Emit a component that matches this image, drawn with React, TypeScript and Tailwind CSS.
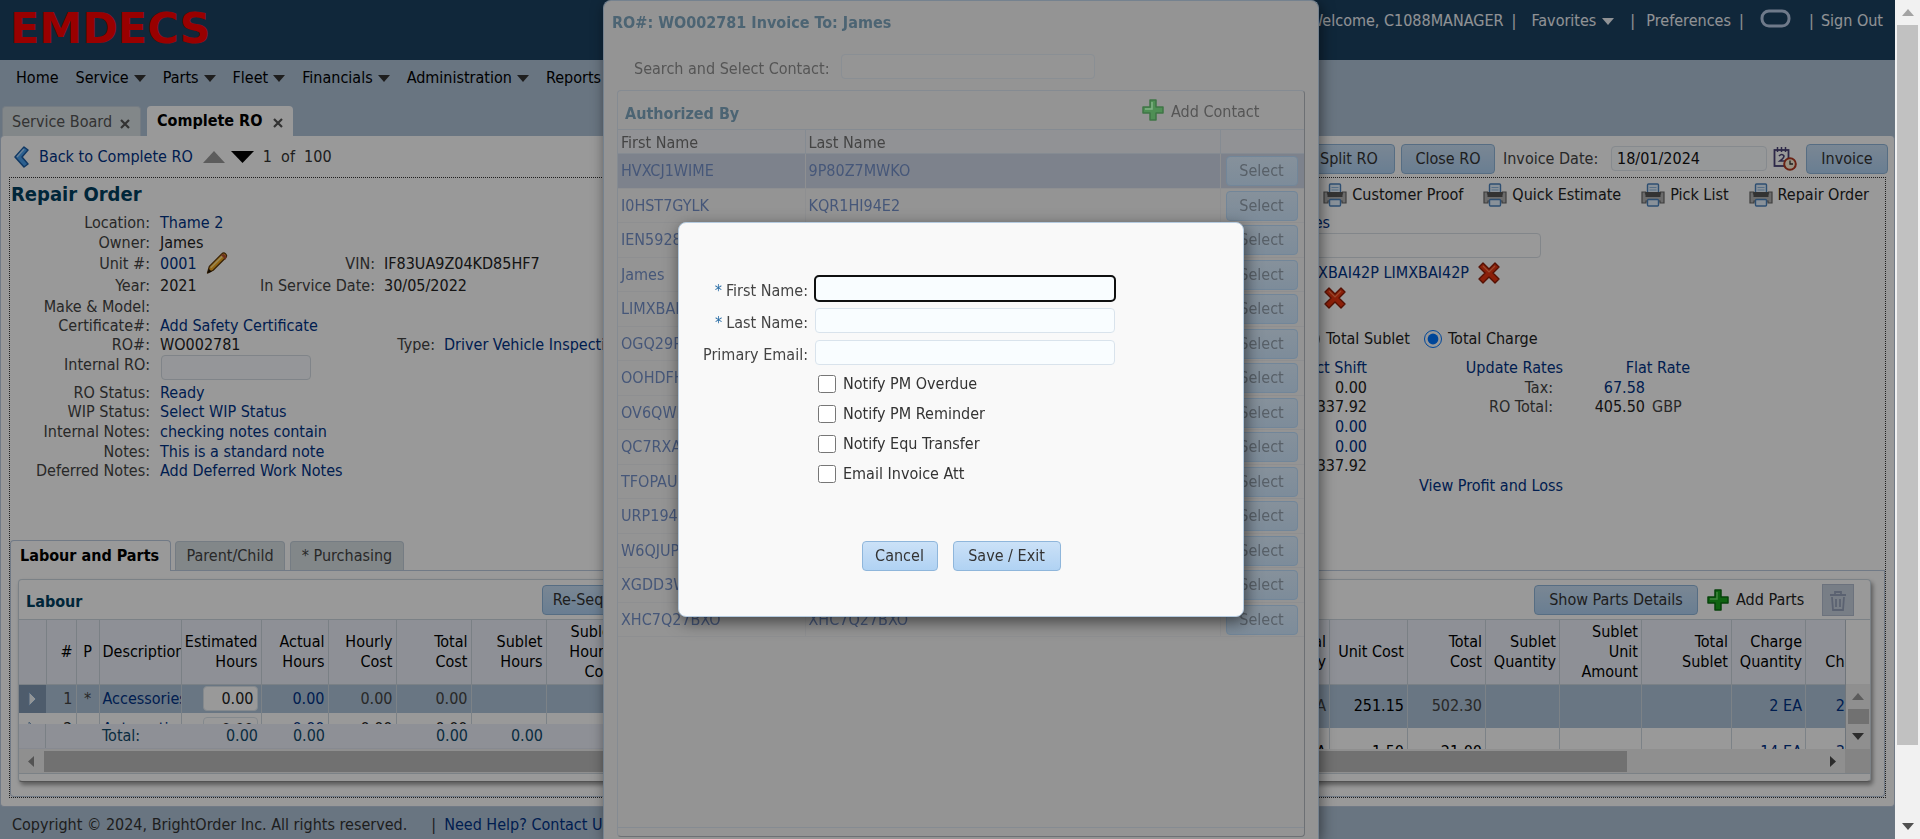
import React from 'react';

const BTN =
  'h-[30px] shrink-0 rounded border border-[#8fb6db] bg-gradient-to-b from-[#cbe1f7] to-[#b0d2f3] whitespace-nowrap text-[#333]';

function Caret({ className = '' }: { className?: string }) {
  return (
    <svg className={`shrink-0 ${className}`} width="12" height="7" viewBox="0 0 12 7" fill="currentColor">
      <path d="M0 0h12L6 7z" />
    </svg>
  );
}

function Plus({ light = false }: { light?: boolean }) {
  return (
    <svg className="shrink-0" width="22" height="22" viewBox="0 0 22 22">
      <path
        d="M8 1h6v7h7v6h-7v7H8v-7H1V8h7z"
        fill={light ? '#4f8f55' : '#18a51c'}
        stroke={light ? '#3f7546' : '#0a6f10'}
        strokeWidth="1.5"
        strokeLinejoin="round"
      />
      <path d="M10 3v7H3" fill="none" stroke={light ? '#83b387' : '#6fe06a'} strokeWidth="1.5" />
    </svg>
  );
}

function RedX() {
  return (
    <svg className="shrink-0" width="22" height="22" viewBox="0 0 22 22">
      <path
        d="M5 1l6 6 6-6 4 4-6 6 6 6-4 4-6-6-6 6-4-4 6-6-6-6z"
        fill="#e8350f"
        stroke="#8e1c05"
        strokeWidth="1.4"
        strokeLinejoin="round"
      />
      <path d="M5 4l6 6 6-6" fill="none" stroke="#ff7a4d" strokeWidth="1.2" />
    </svg>
  );
}

function Printer() {
  return (
    <svg className="shrink-0" width="24" height="24" viewBox="0 0 24 24">
      <rect x="6.500" y="1" width="11" height="10" rx="1" fill="#e4f2ff" stroke="#4c83bd" strokeWidth="1.4" />
      <path d="M8.500 4.500h7M8.500 7h7" stroke="#8fb9e2" />
      <path d="M1 9h3.500v2h15V9H23v11h-4v-2H5v2H1z" fill="#b5b5b5" stroke="#666" strokeWidth="1.2" />
      <rect x="4.500" y="9" width="15" height="5" fill="#555" />
      <rect x="6.500" y="16.500" width="11" height="6.500" rx="1" fill="#e4f2ff" stroke="#4c83bd" strokeWidth="1.4" />
    </svg>
  );
}

function CalendarClock() {
  return (
    <svg className="shrink-0" width="24" height="24" viewBox="0 0 24 24">
      <rect x="1.500" y="3" width="14" height="16" fill="#fff" stroke="#4b4478" strokeWidth="1.8" />
      <path d="M4.500 0v5M8.500 0v5M12.500 0v5" stroke="#4b4478" strokeWidth="1.5" />
      <path d="M6 9q3-3 5 0 0 2-4 5h5" fill="none" stroke="#4b4478" strokeWidth="1.6" />
      <circle cx="17" cy="17" r="5.800" fill="#fff3dd" stroke="#b23a22" strokeWidth="2" />
      <path d="M17 13.500V17h3" fill="none" stroke="#333" strokeWidth="1.3" />
    </svg>
  );
}

function Pencil() {
  return (
    <svg className="shrink-0" width="24" height="23" viewBox="0 0 24 24">
      <path d="M2 22l2-7L17 2q2-2 4 0t0 4L8 19z" fill="#f3a81f" stroke="#5b3607" strokeWidth="1.3" strokeLinejoin="round" />
      <path d="M5.500 16.500L18 4" stroke="#ffe08a" strokeWidth="1.6" />
      <path d="M16 3l5 5 1-3-3-3z" fill="#b6543a" />
      <path d="M2 22l1.500-4.500 3 3z" fill="#1c1206" />
    </svg>
  );
}

function TextLink({ children, className = '' }: { children: React.ReactNode; className?: string }) {
  return (
    <a href="#" className={`whitespace-nowrap text-[#003286] ${className}`}>
      {children}
    </a>
  );
}

function Field({ label, children, wide, second }: { label: string; children?: React.ReactNode; wide?: boolean; second?: [string, React.ReactNode] }) {
  return (
    <div className="flex items-center whitespace-nowrap">
      <span className="w-[140px] shrink-0 text-right text-[#444]">{label}</span>
      <span className="ml-[10px] flex w-[95px] shrink-0 items-center gap-2 text-[#222]">{children}</span>
      {second && (
        <>
          <span className={`shrink-0 text-right text-[#444] ${wide ? 'w-[180px]' : 'w-[120px]'}`}>{second[0]}</span>
          <span className="ml-[9px] text-[#222]">{second[1]}</span>
        </>
      )}
    </div>
  );
}

function TopBar() {
  return (
    <header className="flex h-[60px] items-start justify-between bg-[#1c4162] pl-[10px] text-[#f0f4f8]">
      <a href="#" className="mt-[7px] font-['DejaVu_Sans',sans-serif] text-[43px] leading-[42px] font-bold text-[#ff0000]">
        EMDECS
      </a>
      <div className="flex h-[42px] items-center pr-3 whitespace-nowrap">
        <span>Welcome, C1088MANAGER</span>
        <span className="ml-2 w-1">|</span>
        <button className="ml-4 flex items-center gap-[6px]">
          Favorites <Caret />
        </button>
        <span className="ml-4 w-1">|</span>
        <a href="#" className="ml-3">Preferences</a>
        <span className="ml-2 w-1">|</span>
        <svg className="ml-4 mb-1" width="34" height="20" viewBox="0 0 34 20" fill="none">
          <rect x="3" y="2" width="27" height="15" rx="7" stroke="#b9cbe6" strokeWidth="3" />
        </svg>
        <span className="ml-4 w-1">|</span>
        <a href="#" className="ml-2">Sign Out</a>
      </div>
    </header>
  );
}

const MENU: [string, boolean][] = [
  ['Home', false],
  ['Service', true],
  ['Parts', true],
  ['Fleet', true],
  ['Financials', true],
  ['Administration', true],
  ['Reports', true],
];

function Nav() {
  return (
    <nav className="rounded-t bg-[#afc3d8]">
      <div className="flex h-[36px] items-center gap-[17px] pl-4 text-black">
        {MENU.map(([name, drop]) => (
          <button key={name} className="flex items-center gap-[5px] whitespace-nowrap">
            {name} {drop && <Caret className="text-[#333]" />}
          </button>
        ))}
      </div>
      <div className="flex h-[40px] items-end gap-[6px] pl-[2px]">
        <div className="flex h-[30px] w-[139px] items-center justify-between rounded-t border border-b-0 border-[#c3cfdb] bg-[#d9e1e4] pr-2 pl-[9px] text-[#555] whitespace-nowrap">
          Service Board
          <button aria-label="Close Service Board" className="pt-1"><CloseMark /></button>
        </div>
        <div className="flex h-[30px] w-[146px] items-center justify-between rounded-t bg-white pr-2 pl-[10px] font-bold text-black whitespace-nowrap">
          Complete RO
          <button aria-label="Close Complete RO" className="pt-1"><CloseMark /></button>
        </div>
      </div>
    </nav>
  );
}

function CloseMark() {
  return (
    <svg width="14" height="12" viewBox="0 0 14 12">
      <path d="M3 2l8 8M11 2l-8 8" stroke="#555" strokeWidth="2.200" />
    </svg>
  );
}

function ActionRow() {
  return (
    <div className="flex h-[41px] items-center justify-between pr-[6px] pl-3">
      <div className="flex items-center whitespace-nowrap">
        <svg width="18" height="22" viewBox="0 0 18 22">
          <path d="M11 1l4 3-6 7 6 7-4 3-9-10z" fill="#4aa0ee" stroke="#1c5da6" strokeWidth="1.5" strokeLinejoin="round" />
          <path d="M11 3l-7 8" stroke="#a9d6ff" strokeWidth="1.5" />
        </svg>
        <TextLink className="ml-2">Back to Complete RO</TextLink>
        <button aria-label="Previous" className="ml-[10px] text-[#999]">
          <svg width="22" height="12" viewBox="0 0 22 12" fill="currentColor"><path d="M0 12h22L11 0z" /></svg>
        </button>
        <button aria-label="Next" className="ml-[6px] text-black">
          <svg width="23" height="12" viewBox="0 0 23 12" fill="currentColor"><path d="M0 0h23L11.500 12z" /></svg>
        </button>
        <span className="ml-[9px] text-[#333]">1&nbsp; of &nbsp;100</span>
      </div>
      <div className="flex items-center pt-[4px] whitespace-nowrap">
        <button className={`${BTN} w-[92px]`}>Split RO</button>
        <button className={`${BTN} ml-[6px] w-[94px]`}>Close RO</button>
        <label htmlFor="invoice-date" className="ml-2 w-[108px] text-[#444]">Invoice Date:</label>
        <input id="invoice-date" defaultValue="18/01/2024" className="h-[25px] w-[156px] rounded border border-[#dfe6ed] bg-[#fbfdff] px-[5px] text-[#111]" />
        <button aria-label="Pick date" className="mr-[9px] ml-[6px]"><CalendarClock /></button>
        <button className={`${BTN} w-[82px]`}>Invoice</button>
      </div>
    </div>
  );
}

function OrderFields() {
  return (
    <div className="min-w-0 flex-1 overflow-hidden">
      <h1 className="h-[35px] pl-[1px] text-[20px] leading-[32px] font-bold text-[#00405f]">Repair Order</h1>
      <div className="grid h-[142px] grid-rows-[20px_19px_23px_22px_19px_19px_20px] text-[#222]">
        <Field label="Location:"><TextLink>Thame 2</TextLink></Field>
        <Field label="Owner:">James</Field>
        <Field label="Unit #:" second={['VIN:', 'IF83UA9Z04KD85HF7']}>
          <TextLink>0001</TextLink>
          <button aria-label="Edit unit"><Pencil /></button>
        </Field>
        <Field label="Year:" second={['In Service Date:', '30/05/2022']}>2021</Field>
        <Field label="Make &amp; Model:" />
        <Field label="Certificate#:"><TextLink>Add Safety Certificate</TextLink></Field>
        <Field label="RO#:" wide second={['Type:', <TextLink>Driver Vehicle Inspection</TextLink>]}>WO002781</Field>
      </div>
      <div className="flex h-[28px] items-start">
        <label htmlFor="internal-ro" className="w-[140px] text-right leading-[20px] text-[#444]">Internal RO:</label>
        <input id="internal-ro" className="ml-[11px] h-[25px] w-[150px] rounded border border-[#d5dde4] bg-[#f8fbff]" />
      </div>
      <div className="grid h-[98px] grid-rows-5">
        <Field label="RO Status:"><TextLink>Ready</TextLink></Field>
        <Field label="WIP Status:"><TextLink>Select WIP Status</TextLink></Field>
        <Field label="Internal Notes:"><TextLink>checking notes contain</TextLink></Field>
        <Field label="Notes:"><TextLink>This is a standard note</TextLink></Field>
        <Field label="Deferred Notes:"><TextLink>Add Deferred Work Notes</TextLink></Field>
      </div>
    </div>
  );
}

function Summary() {
  return (
    <div className="w-[620px] shrink-0 whitespace-nowrap">
      <div className="flex h-[34px] items-center justify-end gap-5 pr-[16px]">
        {['Customer Proof', 'Quick Estimate', 'Pick List', 'Repair Order'].map((t) => (
          <a key={t} href="#" className="flex items-center gap-[5px] text-[#222]">
            <Printer />
            {t}
          </a>
        ))}
      </div>
      <div className="flex h-[21px] w-[65px] items-center justify-end"><TextLink>Notes</TextLink></div>
      <input aria-label="Notes filter" className="block h-[25px] w-[276px] rounded border border-[#d9e0e6] bg-white" />
      <div className="flex h-[30px] w-[235px] items-center justify-end gap-[9px]">
        <TextLink>LIMXBAI42P LIMXBAI42P</TextLink>
        <button aria-label="Remove contact"><RedX /></button>
      </div>
      <div className="flex h-[20px] w-[81px] items-center justify-end">
        <button aria-label="Remove"><RedX /></button>
      </div>
      <div className="mt-[17px] flex h-[28px] items-center pl-[37px] text-[#222]">
        <input type="radio" id="t-sublet" name="total" className="size-[18px]" />
        <label htmlFor="t-sublet" className="ml-[6px] w-[98px]">Total Sublet</label>
        <input type="radio" id="t-charge" name="total" defaultChecked className="size-[18px] accent-[#0075ff]" />
        <label htmlFor="t-charge" className="ml-[6px]">Total Charge</label>
      </div>
      <div className="mt-[5px] grid h-[138px] grid-cols-[102px_196px_82px_45px] grid-rows-7 items-center text-right text-[#222]">
        <TextLink>Select Shift</TextLink>
        <TextLink>Update Rates</TextLink>
        <TextLink className="col-span-2">Flat Rate</TextLink>
        <span>0.00</span>
        <span className="pr-[10px] text-[#444]">Tax:</span>
        <TextLink>67.58</TextLink>
        <span />
        <span>337.92</span>
        <span className="pr-[10px] text-[#444]">RO Total:</span>
        <span>405.50</span>
        <span className="pl-[7px] text-left text-[#444]">GBP</span>
        <TextLink className="col-start-1">0.00</TextLink>
        <TextLink className="col-start-1">0.00</TextLink>
        <span className="col-start-1">337.92</span>
        <TextLink className="col-start-2 row-start-7">View Profit and Loss</TextLink>
      </div>
    </div>
  );
}

const PANEL =
  'flex min-w-0 flex-1 flex-col overflow-hidden rounded border border-[#cdd8e0] border-b-[#8a8a8a] bg-white shadow-[2px_3px_4px_rgba(0,0,0,0.4)]';
const TH = 'border-r border-[#ccd5de] px-[3px] text-right font-normal leading-5';
const TD = 'border-r border-[#cfd9e2] px-[3px] text-right whitespace-nowrap overflow-hidden';

function ExpandMark() {
  return (
    <svg className="mx-auto" width="9" height="14" viewBox="0 0 9 14">
      <path d="M1 0l7 7-7 7z" fill="#f4f8fc" stroke="#7fa0c4" />
    </svg>
  );
}

function LabourPanel() {
  return (
    <section className={PANEL}>
      <div className="flex h-[39px] items-center pl-[7px]">
        <h2 className="w-[516px] pt-1 text-[16px] font-bold text-[#00405f]">Labour</h2>
        <button className={`${BTN} w-[116px]`}>Re-Sequence</button>
      </div>
      <div className="h-[130px] overflow-hidden border-t border-[#cdd8e0]">
        <div className="h-[104px] overflow-hidden">
          <table className="w-full table-fixed border-collapse">
            <colgroup>
              <col className="w-[27px]" />
              <col className="w-[30px]" />
              <col className="w-[23px]" />
              <col className="w-[82px]" />
              <col className="w-[80px]" />
              <col className="w-[67px]" />
              <col className="w-[68px]" />
              <col className="w-[75px]" />
              <col className="w-[75px]" />
              <col className="w-[74px]" />
              <col />
            </colgroup>
            <thead>
              <tr className="h-[64px] border-b border-[#cdd8e0] bg-[#edf1fa] text-black">
                <th className={TH} />
                <th className={TH}>#</th>
                <th className="border-r border-[#ccd5de] px-0 text-center font-normal">P</th>
                <th className={`${TH} overflow-hidden`}>
                  <span className="flex">Description</span>
                </th>
                <th className={TH}>Estimated Hours</th>
                <th className={TH}>Actual Hours</th>
                <th className={TH}>Hourly Cost</th>
                <th className={`${TH} pl-5`}>Total Cost</th>
                <th className={TH}>Sublet Hours</th>
                <th className={TH}>Sublet Hourly Cost</th>
                <th className={TH} />
              </tr>
            </thead>
            <tbody>
              {[
                ['1', '*', 'Accessories', true],
                ['2', '', 'Automotive', false],
              ].map(([n, p, d, on]) => (
                <tr key={String(n)} className={on ? 'h-[29px] bg-[#afc5da] text-[#444]' : 'h-[32px] text-[#222]'}>
                  <td className={on ? 'bg-[#8299b5]' : ''}><ExpandMark /></td>
                  <td className={TD}>{n}</td>
                  <td className="border-r border-[#cfd9e2] px-0 text-center">{p}</td>
                  <td className={`${TD} text-left`}><TextLink>{d}</TextLink></td>
                  <td className={TD}>
                    <input aria-label={`Estimated hours ${n}`} defaultValue="0.00" className="ml-auto block h-[25px] w-[55px] rounded border border-[#dde5ec] bg-white px-[3px] text-right text-[#222]" />
                  </td>
                  <td className={TD}><TextLink>0.00</TextLink></td>
                  <td className={TD}>0.00</td>
                  <td className={TD}>0.00</td>
                  <td className={TD} />
                  <td className={TD} />
                  <td className={TD} />
                </tr>
              ))}
            </tbody>
          </table>
        </div>
        <div className="flex h-[25px] items-center border-b border-[#e2e7f2] bg-[#edf1fa] text-[#124a6b]">
          <span className="h-full w-[27px] shrink-0 border-r border-[#ccd5de]" />
          <span className="w-[135px] shrink-0 pl-[56px]">Total:</span>
          <span className="w-[77px] shrink-0 text-right">0.00</span>
          <span className="w-[67px] shrink-0 text-right">0.00</span>
          <span className="w-[143px] shrink-0 text-right">0.00</span>
          <span className="w-[75px] shrink-0 text-right">0.00</span>
        </div>
      </div>
      <div className="flex h-[25px] items-center border-b border-[#cdd8e0] bg-[#efefef] pl-[9px]">
        <svg width="16" height="11" viewBox="0 0 16 11" fill="#8a8a8a"><path d="M6 0v11L0 5.500z" /></svg>
        <div className="h-[21px] flex-1 bg-[#bdbdbd]" />
      </div>
      <div className="h-[7px]" />
    </section>
  );
}

function PartsPanel() {
  const rows = [
    ['2 EA', '251.15', '502.30', '2 EA', '27.50'],
    ['14 EA', '1.50', '21.00', '14 EA', '32.50'],
  ];
  return (
    <section className={PANEL}>
      <div className="flex h-[39px] items-center justify-end pt-px pr-4 whitespace-nowrap">
        <button className={`${BTN} w-[164px]`}>Show Parts Details</button>
        <button className="ml-[9px] flex w-[100px] items-center gap-[7px] text-[#222]">
          <Plus /> Add Parts
        </button>
        <button aria-label="Delete" className="ml-[15px] flex size-8 items-center justify-center border border-[#b4bfd0] bg-[#c9d2e0]">
          <svg width="18" height="21" viewBox="0 0 18 21" fill="none" stroke="#98a4bd" strokeWidth="1.8">
            <path d="M1 5h16M6 5V2h6v3M3 7l1 13h10l1-13M7 9v8M11 9v8" />
          </svg>
        </button>
      </div>
      <div className="flex h-[130px] border-t border-[#cdd8e0]">
        <div className="min-w-0 flex-1 overflow-hidden">
          <table className="w-[calc(100%+36px)] table-fixed border-collapse">
            <colgroup>
              <col />
              <col className="w-[78px]" />
              <col className="w-[78px]" />
              <col className="w-[74px]" />
              <col className="w-[82px]" />
              <col className="w-[90px]" />
              <col className="w-[74px]" />
              <col className="w-[75px]" />
            </colgroup>
            <thead>
              <tr className="h-[64px] border-b border-[#cdd8e0] bg-[#edf1fa] text-black">
                <th className={TH}>Total<br />Quantity</th>
                <th className={TH}>Unit Cost</th>
                <th className={TH}>Total<br />Cost</th>
                <th className={TH}>Sublet Quantity</th>
                <th className={TH}>Sublet<br />Unit<br />Amount</th>
                <th className={TH}>Total<br />Sublet</th>
                <th className={TH}>Charge Quantity</th>
                <th className={TH}>Unit<br />Charge</th>
              </tr>
            </thead>
            <tbody>
              {rows.map((r, i) => (
                <tr key={i} className={i === 0 ? 'h-[44px] bg-[#afc5da] text-[#444]' : 'h-[48px] text-black'}>
                  <td className={TD}>{r[0]}</td>
                  <td className={`${TD} text-black`}>{r[1]}</td>
                  <td className={TD}>{r[2]}</td>
                  <td className={TD} />
                  <td className={TD} />
                  <td className={TD} />
                  <td className={TD}><TextLink>{r[3]}</TextLink></td>
                  <td className={TD}><TextLink>{r[4]}</TextLink></td>
                </tr>
              ))}
            </tbody>
          </table>
        </div>
        <div className="flex w-[25px] shrink-0 flex-col border-l border-[#b9c4ce] pt-[64px]">
          <div className="flex flex-1 flex-col items-center justify-between bg-[#efefef] py-[9px]">
            <svg width="12" height="7" viewBox="0 0 12 7" fill="#9a9a9a"><path d="M0 7h12L6 0z" /></svg>
            <div className="h-[15px] w-[21px] bg-[#bdbdbd]" />
            <Caret className="text-[#4a4a4a]" />
          </div>
        </div>
      </div>
      <div className="flex h-[25px] items-center border-b border-[#cdd8e0] bg-[#efefef]">
        <div className="h-[21px] flex-1 bg-[#bdbdbd]" />
        <div className="flex w-[218px] justify-end pr-[9px]">
          <svg width="6" height="11" viewBox="0 0 6 11" fill="#4a4a4a"><path d="M0 0v11l6-5.500z" /></svg>
        </div>
        <div className="h-full w-[25px] bg-[#dcdcdc]" />
      </div>
      <div className="h-[7px]" />
    </section>
  );
}

function OrderPage() {
  return (
    <div className="flex flex-1 flex-col">
      <TopBar />
      <div className="flex flex-1 flex-col bg-[#afc3d8]">
        <Nav />
        <main className="rounded border border-t-0 border-[#bccbe0] bg-white px-[8px] pb-[8px]">
          <div className="-mx-[8px]"><ActionRow /></div>
          <div className="border border-dotted border-[#333]">
            <div className="flex h-[363px]">
              <OrderFields />
              <Summary />
            </div>
            <div className="flex h-[30px] items-end whitespace-nowrap">
              <button className="h-[31px] w-[161px] shrink-0 rounded-t border border-b-0 border-[#bccbe0] bg-white text-left font-bold text-black">
                <span className="pl-[9px]">Labour and Parts</span>
              </button>
              <div className="flex h-full flex-1 gap-[5px] border-b border-[#bccbe0] pl-1">
                <button className="h-[29px] w-[110px] rounded-t border border-b-0 border-[#c3cfdb] bg-[#d9e1e4] text-[#444]">Parent/Child</button>
                <button className="h-[29px] w-[114px] rounded-t border border-b-0 border-[#c3cfdb] bg-[#d9e1e4] text-[#444]">* Purchasing</button>
              </div>
            </div>
            <div className="flex gap-3 rounded-b border border-t-0 border-[#bccbe0] pt-2 pr-[13px] pb-[14px] pl-[7px]">
              <LabourPanel />
              <PartsPanel />
            </div>
          </div>
        </main>
        <footer className="flex h-[31px] items-center pt-[5px] pl-3 whitespace-nowrap text-[#333]">
          <span>Copyright © 2024, BrightOrder Inc. All rights reserved.</span>
          <span className="ml-6 mr-2">|</span>
          <TextLink>Need Help? Contact Us</TextLink>
        </footer>
      </div>
    </div>
  );
}

const CONTACTS: [string, string][] = [
  ['HVXCJ1WIME', '9P80Z7MWKO'],
  ['I0HST7GYLK', 'KQR1HI94E2'],
  ['IEN5928XQT', 'IEN5928XQT'],
  ['James', 'James'],
  ['LIMXBAI42P', 'LIMXBAI42P'],
  ['OGQ29PLKWE', 'OGQ29PLKWE'],
  ['OOHDFHRT3B', 'OOHDFHRT3B'],
  ['OV6QWMZ81L', 'OV6QWMZ81L'],
  ['QC7RXA5NPD', 'QC7RXA5NPD'],
  ['TFOPAU2HJS', 'TFOPAU2HJS'],
  ['URP194VKCY', 'URP194VKCY'],
  ['W6QJUPE7GF', 'W6QJUPE7GF'],
  ['XGDD3W9TRA', 'XGDD3W9TRA'],
  ['XHC7Q27BXO', 'XHC7Q27BXO'],
];

function ContactDialog() {
  return (
    <div className="flex h-full w-[716px] flex-col rounded-t-lg border border-b-0 border-[#75828f] bg-[#949494] px-[13px] pb-[2px] text-[#555] shadow-[2px_4px_14px_rgba(0,0,0,0.5)]">
      <h2 className="-ml-[5px] h-[45px] text-[16px] leading-[43px] font-bold text-[#4c6473]">RO#: WO002781 Invoice To: James</h2>
      <div className="flex h-[44px] items-center pb-[3px] pl-[17px]">
        <label htmlFor="search-contact" className="w-[207px] pt-1">Search and Select Contact:</label>
        <input id="search-contact" className="h-[25px] w-[254px] rounded border border-[#8a8f94] bg-[#959595]" />
      </div>
      <section className="flex flex-1 flex-col rounded border border-[#858b92] border-r-[#6d7074] border-b-[#6d7074]">
        <div className="flex h-[38px] items-center justify-between pr-[43px] pl-[7px]">
          <h3 className="pt-2 text-[16px] font-bold text-[#4c6473]">Authorized By</h3>
          <button className="flex w-[119px] items-center gap-[7px] whitespace-nowrap">
            <Plus light />
            <span className="pt-1">Add Contact</span>
          </button>
        </div>
        <table className="w-full table-fixed border-collapse text-left">
          <colgroup>
            <col className="w-[187px]" />
            <col />
            <col className="w-[84px]" />
          </colgroup>
          <thead>
            <tr className="h-[24px] border-y border-[#858b92] bg-[#919295] text-[#444]">
              <th className="border-r border-[#858b92] pt-[2px] pb-0 pl-[3px] leading-5 font-normal">First Name</th>
              <th className="border-r border-[#858b92] pt-[2px] pb-0 pl-[3px] leading-5 font-normal">Last Name</th>
              <th />
            </tr>
          </thead>
          <tbody>
            {CONTACTS.map(([first, last], i) => (
              <tr
                key={first}
                className={`odd:h-[35px] even:h-[34px] border-b border-[#8e8f91] text-[#465779] ${i === 0 ? 'bg-[#7d828c]' : ''}`}
              >
                <td className="border-r border-[#8e8f91] py-0 pl-[3px]"><a href="#">{first}</a></td>
                <td className="border-r border-[#8e8f91] py-0 pl-[3px]"><a href="#">{last}</a></td>
                <td className="py-0 pl-[5px]">
                  <button className="block h-[30px] w-[72px] rounded border border-[#728699] bg-gradient-to-b from-[#86919b] to-[#7d8c9a] text-[#586068]">
                    Select
                  </button>
                </td>
              </tr>
            ))}
          </tbody>
        </table>
        <div className="flex-1 border-b border-[#858b92]" />
        <div className="h-[8px]" />
      </section>
    </div>
  );
}

const MODAL_INPUT = 'h-[25px] w-[300px] rounded border border-[#d9e3ec] bg-[#f9fdff] px-1';

function ModalField({ id, label, required, focus }: { id: string; label: string; required?: boolean; focus?: boolean }) {
  return (
    <div className="flex h-[32px] items-start">
      <label htmlFor={id} className="w-[129px] pt-[5px] text-right leading-5 whitespace-nowrap text-[#444]">
        {required && <span className="mr-1 text-[#2a6da5]">*</span>}
        {label}
      </label>
      <input
        id={id}
        autoFocus={focus}
        className={`${MODAL_INPUT} ml-[7px] focus:outline-2 focus:-outline-offset-1 focus:outline-[#101010]`}
      />
    </div>
  );
}

function AddContactModal() {
  return (
    <div
      role="dialog"
      aria-label="Add Contact"
      className="flex h-[395px] w-[566px] flex-col rounded-lg border border-[#b5cbe0] bg-[#f9f9f9] pt-[53px] text-[#333] shadow-[2px_5px_16px_rgba(0,0,0,0.55)]"
    >
      <ModalField id="first-name" label="First Name:" required focus />
      <ModalField id="last-name" label="Last Name:" required />
      <ModalField id="email" label="Primary Email:" />
      {['Notify PM Overdue', 'Notify PM Reminder', 'Notify Equ Transfer', 'Email Invoice Att'].map((t) => (
        <label key={t} className="flex h-[30px] items-center gap-[7px] pb-[6px] pl-[139px]">
          <input type="checkbox" className="size-[18px]" />
          {t}
        </label>
      ))}
      <div className="mt-[49px] flex justify-center gap-[15px]">
        <button className={`${BTN} w-[76px]`}>Cancel</button>
        <button className={`${BTN} w-[108px]`}>Save / Exit</button>
      </div>
    </div>
  );
}

export default function App() {
  return (
    <div className="relative flex min-h-screen overflow-hidden font-['DejaVu_Sans_Condensed','DejaVu_Sans',sans-serif] text-[16px] leading-5">
      <div className="relative flex min-w-0 flex-1 flex-col">
        <OrderPage />
        <div className="absolute inset-0 bg-black/40" />
      </div>
      <div className="flex w-[25px] shrink-0 flex-col items-center bg-[#f1f1f1]">
        <div className="flex h-[25px] items-center">
          <svg width="12" height="7" viewBox="0 0 12 7" fill="#a3a3a3"><path d="M0 7h12L6 0z" /></svg>
        </div>
        <div className="w-[21px] flex-[720] bg-[#c1c1c1]" />
        <div className="flex-[69]" />
        <div className="flex h-[25px] items-center">
          <Caret className="text-[#505050]" />
        </div>
      </div>
      <div className="fixed inset-0 flex justify-center pl-[2px]">
        <ContactDialog />
      </div>
      <div className="fixed inset-0 flex items-center justify-center pl-[2px]">
        <AddContactModal />
      </div>
    </div>
  );
}
